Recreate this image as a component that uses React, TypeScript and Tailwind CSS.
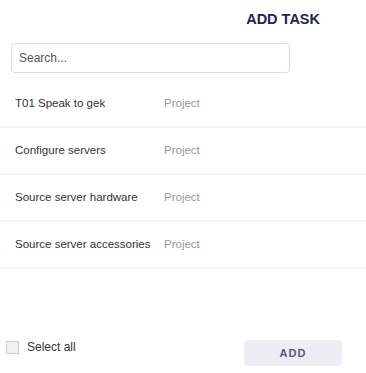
import { useState } from "react";

const tasks = [
  { id: 1, name: "T01 Speak to gek", type: "Project" },
  { id: 2, name: "Configure servers", type: "Project" },
  { id: 3, name: "Source server hardware", type: "Project" },
  { id: 4, name: "Source server accessories", type: "Project" },
];

const App = () => {
  const [query, setQuery] = useState("");
  const [all, setAll] = useState(false);
  const shown = tasks.filter((t) => t.name.toLowerCase().includes(query.toLowerCase()));

  return (
    <div className="flex h-[373px] w-[366px] flex-col bg-white font-['Liberation_Sans',Arial,sans-serif]">
      <div className="flex justify-end pr-[46px] pt-[10px]">
        <h1 className="text-[14.5px] font-bold leading-[18px] text-[#25254f]">ADD TASK</h1>
      </div>
      <div className="pl-[11px] pt-[15px]">
        <input
          value={query}
          onChange={(e) => setQuery(e.target.value)}
          placeholder="Search..."
          className="h-[30px] w-[279px] rounded-[4px] border-[1.5px] border-[#dcdcdc] px-[7px] text-[12px] text-[#333] outline-none placeholder:text-[#555]"
        />
      </div>
      <div className="mt-[8px] flex flex-col">
        {shown.map((t) => (
          <div key={t.id} className="flex h-[47px] items-center border-b-2 border-[#f5f5f5] pl-[15px] text-[11.5px]">
            <span className="w-[149px] text-[#333]">{t.name}</span>
            <span className="text-[#999]">{t.type}</span>
          </div>
        ))}
      </div>
      <div className="mt-auto flex items-start justify-between pb-[7px] pl-[6px] pr-[24px]">
        <label className="flex h-[14px] items-center gap-[8px] text-[12px] text-[#333]">
          <input
            type="checkbox"
            checked={all}
            onChange={() => setAll(!all)}
            className="h-[13px] w-[13px] appearance-none border border-[#cfcfcf] bg-[#f0f0f0]"
          />
          Select all
        </label>
        <button className="h-[26px] w-[98px] rounded-[4px] bg-[#eeedf3] text-[11px] font-bold tracking-[1px] text-[#5a5688]">
          ADD
        </button>
      </div>
    </div>
  );
};

export default App;
